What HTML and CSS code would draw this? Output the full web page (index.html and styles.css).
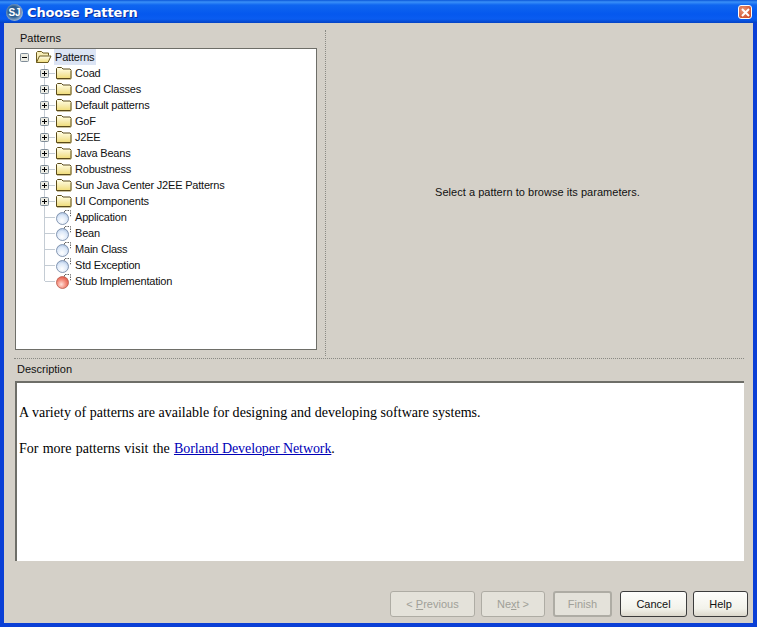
FILE: index.html
```html
<!DOCTYPE html>
<html lang="en">
<head>
<meta charset="utf-8">
<title>Choose Pattern</title>
<link rel="stylesheet" href="styles.css">
</head>
<body>
<svg class="defs" width="0" height="0" aria-hidden="true">
  <defs>
    <linearGradient id="fold" x1="0" y1="0" x2="0" y2="1"><stop offset="0" stop-color="#fffef0"/><stop offset="1" stop-color="#f0dc78"/></linearGradient>
    <radialGradient id="blue" cx=".45" cy=".7" r=".75"><stop offset="0" stop-color="#fff"/><stop offset=".6" stop-color="#dce8f8"/><stop offset="1" stop-color="#a4bcdc"/></radialGradient>
    <radialGradient id="red" cx=".4" cy=".65" r=".75"><stop offset="0" stop-color="#ffe0d8"/><stop offset=".5" stop-color="#f48c7c"/><stop offset="1" stop-color="#d84c3c"/></radialGradient>
    <symbol id="i-folder" viewBox="0 0 16 14"><path d="M.5 12.500V2.500l1-1h4l1.500 1.500h7l1 1v8l-.5.500h-14z" fill="url(#fold)" stroke="#5a4a18"/><path d="M1.500 4.500h13" stroke="#fff8c8"/><path d="M15.500 5v8M1 13.500h14" stroke="#a89860" stroke-width=".6"/></symbol>
    <symbol id="i-open" viewBox="0 0 17 14"><path d="M1.500 12.500V2.500l1-1h4l1.500 1.500h5.500v2.500" fill="#f8eeb8" stroke="#6b5a1e"/><path d="M1.500 12.500l3-6.500h11.500l-3 6.500z" fill="url(#fold)" stroke="#6b5a1e"/></symbol>
    <symbol id="i-plus" viewBox="0 0 9 9"><rect x=".5" y=".5" width="8" height="8" rx="1" fill="#ecece4" stroke="#7f8c98"/><path d="M2 4.500h5M4.500 2v5" stroke="#000"/></symbol>
    <symbol id="i-minus" viewBox="0 0 9 9"><rect x=".5" y=".5" width="8" height="8" rx="1" fill="#ecece4" stroke="#7f8c98"/><path d="M2 4.500h5" stroke="#000"/></symbol>
    <symbol id="i-ball" viewBox="0 0 16 16"><circle cx="6.500" cy="9.500" r="6" fill="url(#blue)" stroke="#6c80a0" stroke-width=".8"/><path d="M8.500 3.500V1.500h6v5.500h-1.500" fill="none" stroke="#666" stroke-dasharray="1.500 1"/></symbol>
    <symbol id="i-ballred" viewBox="0 0 16 16"><circle cx="6.500" cy="9.500" r="6" fill="url(#red)" stroke="#b85848" stroke-width=".8"/><path d="M8.500 3.500V1.500h6v5.500h-1.500" fill="none" stroke="#666" stroke-dasharray="1.500 1"/></symbol>
  </defs>
</svg>
<div class="window">
  <header class="titlebar">
    <span class="appicon">SJ</span>
    <h1 class="title">Choose Pattern</h1>
    <button class="close" aria-label="Close"><svg width="9" height="9" viewBox="0 0 9 9"><path d="M1 1l7 7M8 1l-7 7" stroke="#fff" stroke-width="2"/></svg></button>
  </header>
  <main class="client">
    <section class="upper">
      <div class="patterns">
        <div class="label label-patterns">Patterns</div>
        <div class="tree">
          <div class="row root">
            <svg class="exp"><use href="#i-minus"/></svg>
            <svg class="ico-open"><use href="#i-open"/></svg>
            <span class="node selected">Patterns</span>
          </div>
          <div class="children">
            <div class="row child"><svg class="exp"><use href="#i-plus"/></svg><svg class="ico"><use href="#i-folder"/></svg><span class="node">Coad</span></div>
            <div class="row child"><svg class="exp"><use href="#i-plus"/></svg><svg class="ico"><use href="#i-folder"/></svg><span class="node">Coad Classes</span></div>
            <div class="row child"><svg class="exp"><use href="#i-plus"/></svg><svg class="ico"><use href="#i-folder"/></svg><span class="node">Default patterns</span></div>
            <div class="row child"><svg class="exp"><use href="#i-plus"/></svg><svg class="ico"><use href="#i-folder"/></svg><span class="node">GoF</span></div>
            <div class="row child"><svg class="exp"><use href="#i-plus"/></svg><svg class="ico"><use href="#i-folder"/></svg><span class="node">J2EE</span></div>
            <div class="row child"><svg class="exp"><use href="#i-plus"/></svg><svg class="ico"><use href="#i-folder"/></svg><span class="node">Java Beans</span></div>
            <div class="row child"><svg class="exp"><use href="#i-plus"/></svg><svg class="ico"><use href="#i-folder"/></svg><span class="node">Robustness</span></div>
            <div class="row child"><svg class="exp"><use href="#i-plus"/></svg><svg class="ico"><use href="#i-folder"/></svg><span class="node">Sun Java Center J2EE Patterns</span></div>
            <div class="row child"><svg class="exp"><use href="#i-plus"/></svg><svg class="ico"><use href="#i-folder"/></svg><span class="node">UI Components</span></div>
            <div class="row child leaf"><svg class="ico"><use href="#i-ball"/></svg><span class="node">Application</span></div>
            <div class="row child leaf"><svg class="ico"><use href="#i-ball"/></svg><span class="node">Bean</span></div>
            <div class="row child leaf"><svg class="ico"><use href="#i-ball"/></svg><span class="node">Main Class</span></div>
            <div class="row child leaf"><svg class="ico"><use href="#i-ball"/></svg><span class="node">Std Exception</span></div>
            <div class="row child leaf last"><svg class="ico"><use href="#i-ballred"/></svg><span class="node">Stub Implementation</span></div>
          </div>
        </div>
      </div>
      <div class="params">Select a pattern to browse its parameters.</div>
    </section>
    <section class="description">
      <div class="label label-desc">Description</div>
      <div class="desc-box">
        <p>A variety of patterns are available for designing and developing software systems.</p>
        <p class="more">For more patterns visit the <a href="#">Borland Developer Network</a>.</p>
      </div>
    </section>
    <footer class="buttons">
      <button class="btn btn-prev" disabled>&lt; <u>P</u>revious</button>
      <button class="btn btn-next" disabled>Ne<u>x</u>t &gt;</button>
      <button class="btn btn-finish" disabled>Finish</button>
      <button class="btn btn-cancel">Cancel</button>
      <button class="btn btn-help">Help</button>
    </footer>
  </main>
</div>
</body>
</html>
```

FILE: styles.css
```css
* { box-sizing: border-box; }
html, body { margin: 0; padding: 0; }
body { width: 757px; height: 627px; overflow: hidden; font: 11px "Liberation Sans", Arial, sans-serif; color: #111; }
.defs { position: absolute; }
.window { width: 757px; height: 627px; display: flex; flex-direction: column; background: #0a3fd6; }
.titlebar { height: 23px; flex: none; display: flex; align-items: center; padding: 1px 5px 0 6px;
  background: linear-gradient(#0a56d8 0, #3a90f8 2px, #0f66f0 5px, #0558ee 14px, #0a5cf0 19px, #0442c4 23px); }
.appicon { width: 17px; height: 17px; border-radius: 50%; background: radial-gradient(circle at 45% 45%, #2c5f94 40%, #d4e2f0 85%); color: #fff; font: bold 10px/17px "Liberation Sans", sans-serif; text-align: center; }
.title { margin: 0 0 0 4px; flex: 1; font: bold 13px "DejaVu Sans", sans-serif; letter-spacing: -.15px; color: #fff; text-shadow: 1px 1px 0 #0a2f9c; }
.close { width: 14px; height: 14px; padding: 0; border: 1px solid #fff; border-radius: 3px; background: radial-gradient(circle at 35% 35%, #ea9878, #c83c18); display: flex; align-items: center; justify-content: center; }
.client { flex: 1; margin: 0 4px 4px 4px; background: #d4d0c8; display: flex; flex-direction: column; min-height: 0; }
.upper { height: 329px; flex: none; margin: 7px 9px 0 10px; display: flex; border-bottom: 1px dotted #8a8a84; }
.patterns { width: 312px; flex: none; padding-right: 3px; border-right: 1px dotted #8a8a84; margin-bottom: 2px; }
.label { height: 18px; line-height: 14px; }
.label-patterns { padding: 1px 0 0 6px; }
.tree { width: 302px; height: 302px; margin-left: 1px; background: #fff; border: 1px solid #6e6e68; overflow: hidden; }
.row { height: 16px; display: flex; align-items: center; position: relative; }
.root { padding-left: 4px; }
.exp { width: 9px; height: 9px; flex: none; position: relative; z-index: 1; }
.ico-open { width: 17px; height: 14px; flex: none; margin: 0 2px 0 6px; }
.ico { width: 16px; height: 14px; flex: none; margin-right: 2px; position: relative; }
.leaf .ico { height: 16px; }
.node { line-height: 16px; padding: 0 1px; letter-spacing: -.2px; white-space: nowrap; }
.selected { background: #dce4f4; padding: 0 2px 0 1px; height: 16px; }
.child { padding-left: 24px; }
.child .ico { margin-left: 7px; }
.child::before { content: ""; position: absolute; left: 28px; top: 0; bottom: 0; border-left: 1px solid #c4ccd4; }
.child::after { content: ""; position: absolute; left: 29px; top: 8px; width: 10px; border-top: 1px solid #c4ccd4; }
.last::before { bottom: 8px; }
.leaf { padding-left: 33px; }
.params { flex: 1; display: flex; align-items: center; justify-content: center; padding: 0 0 4px 5px; letter-spacing: .03px; }
.description { flex: none; margin: 0 9px 0 10px; }
.label-desc { padding: 3px 0 0 3px; height: 22px; }
.desc-box { margin-left: 1px; height: 180px; background: #fff; border-top: 2px solid #6e6e68; border-left: 2px solid #6e6e68; padding: 21px 0 0 2px; font: 14px/18px "Liberation Serif", serif; letter-spacing: .025px; color: #000; }
.desc-box p { margin: 0 0 18px; }
.desc-box .more { word-spacing: .6px; }
.desc-box a { color: #0000b8; letter-spacing: -.08px; word-spacing: 0; }
.buttons { flex: 1; display: flex; align-items: flex-start; padding: 30px 5px 0 386px; }
.btn { height: 26px; padding: 0; border: 1px solid #3c3c3c; border-radius: 3px; background: linear-gradient(#fefefc, #f2f2ea 70%, #dcd8cc); font: 11px "Liberation Sans", sans-serif; color: #111; }
.btn:disabled { color: #a0a098; border-color: #aeaca4; background: #e4e2da; }
.btn-prev { width: 85px; margin-right: 6px; }
.btn-next { width: 64px; margin-right: 8px; }
.btn-finish { width: 59px; margin-right: 8px; border-width: 2px; border-color: #a8a8a0; }
.btn-cancel { width: 67px; margin-right: 6px; }
.btn-help { width: 55px; }
```
